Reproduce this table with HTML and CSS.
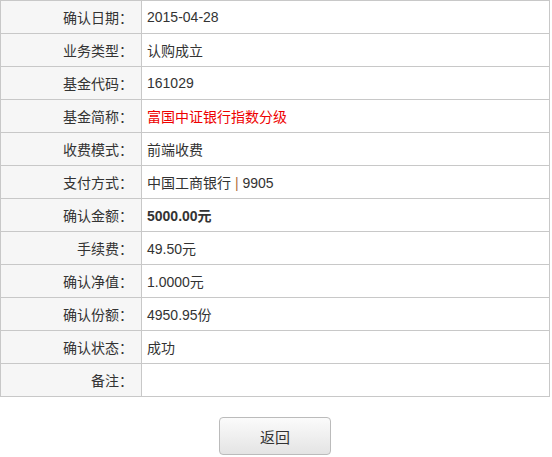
FILE: index.html
```html
<!DOCTYPE html>
<html lang="zh-CN">
<head>
  <meta charset="UTF-8" />
  <meta name="viewport" content="width=device-width, initial-scale=1.0"/>
  <title>交易详情</title>
  <link rel="stylesheet" href="styles.css">
</head>
<body>
  <table class="detail-table">
    <tr><th>确认日期：</th><td>2015-04-28</td></tr>
    <tr><th>业务类型：</th><td>认购成立</td></tr>
    <tr><th>基金代码：</th><td>161029</td></tr>
    <tr><th>基金简称：</th><td class="fund-name">富国中证银行指数分级</td></tr>
    <tr><th>收费模式：</th><td>前端收费</td></tr>
    <tr><th>支付方式：</th><td>中国工商银行 <span class="sep">|</span> 9905</td></tr>
    <tr><th>确认金额：</th><td class="amount">5000.00元</td></tr>
    <tr><th>手续费：</th><td>49.50元</td></tr>
    <tr><th>确认净值：</th><td>1.0000元</td></tr>
    <tr><th>确认份额：</th><td>4950.95份</td></tr>
    <tr><th>确认状态：</th><td>成功</td></tr>
    <tr><th>备注：</th><td></td></tr>
  </table>

  <div class="btn-back"><button type="button">返回</button></div>
</body>
</html>
```

FILE: styles.css
```css
* {
  margin: 0;
  padding: 0;
  box-sizing: border-box;
}

body {
  font-family: "Liberation Sans", "Noto Sans CJK SC", sans-serif;
  font-size: 14px;
  color: #333;
  background: #fff;
}

.detail-table {
  width: 550px;
  border-collapse: collapse;
}

.detail-table th,
.detail-table td {
  height: 33px;
  border: 1px solid #c8c8c8;
  font-weight: normal;
  vertical-align: middle;
}

.detail-table th {
  width: 141px;
  text-align: right;
  padding-right: 8px;
  background: #f6f6f6;
}

.detail-table td {
  text-align: left;
  padding-left: 5px;
}

.detail-table .fund-name {
  color: #e00;
}

.sep {
  color: #b0703a;
}

.detail-table .amount {
  font-weight: bold;
}

.btn-back {
  width: 550px;
  text-align: center;
  margin-top: 20px;
}

.btn-back button {
  width: 112px;
  height: 38px;
  font-family: inherit;
  font-size: 15px;
  color: #333;
  border: 1px solid #bbb;
  border-radius: 4px;
  background: linear-gradient(#fbfbfb, #e4e4e4);
  cursor: pointer;
}

.btn-back button:hover {
  background: linear-gradient(#fff, #ececec);
}
```
